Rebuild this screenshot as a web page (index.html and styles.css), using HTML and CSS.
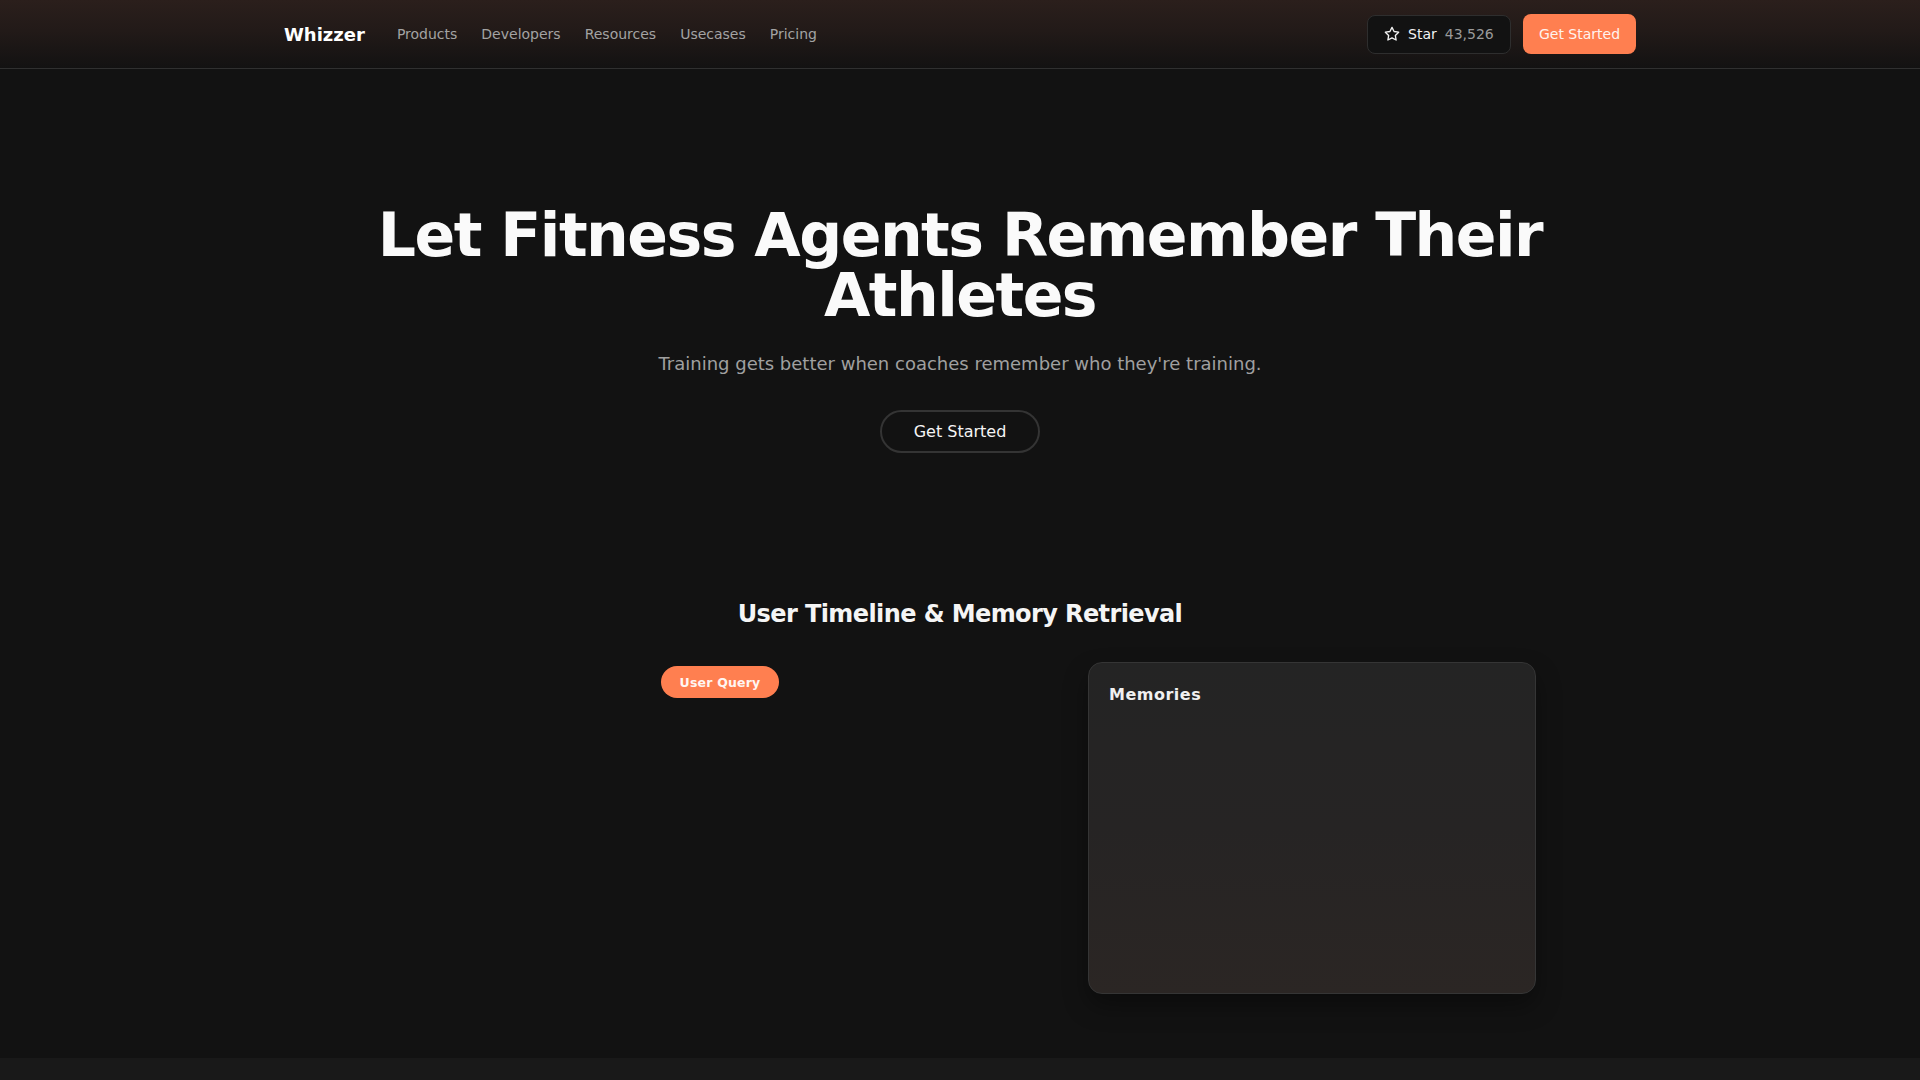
FILE: index.html
```html
<!DOCTYPE html>
<html lang="en">
<head>
<meta charset="utf-8">
<title>Whizzer</title>
<link rel="stylesheet" href="styles.css">
</head>
<body>
<header class="nav">
  <div class="nav-inner">
    <div class="nav-left">
      <a class="logo" href="#">Whizzer</a>
      <nav class="links">
        <a href="#">Products</a>
        <a href="#">Developers</a>
        <a href="#">Resources</a>
        <a href="#">Usecases</a>
        <a href="#">Pricing</a>
      </nav>
    </div>
    <div class="nav-right">
      <a class="star-btn" href="#">
        <svg class="star-icon" width="16" height="16" viewBox="0 0 24 24" fill="none" stroke="currentColor" stroke-width="2" stroke-linejoin="round"><polygon points="12 2 15.09 8.26 22 9.27 17 14.14 18.18 21.02 12 17.77 5.82 21.02 7 14.14 2 9.27 8.91 8.26 12 2"/></svg>
        <span class="star-label">Star</span>
        <span class="star-count">43,526</span>
      </a>
      <a class="cta" href="#">Get Started</a>
    </div>
  </div>
</header>

<main>
  <section class="hero">
    <h1 class="hero-title">Let Fitness Agents Remember Their Athletes</h1>
    <p class="hero-sub">Training gets better when coaches remember who they're training.</p>
    <a class="hero-btn" href="#">Get Started</a>
  </section>

  <section class="timeline">
    <h2 class="timeline-title">User Timeline &amp; Memory Retrieval</h2>
    <div class="timeline-grid">
      <div class="timeline-rail"></div>
      <div class="query-col">
        <span class="pill">User Query</span>
      </div>
      <div class="memories">
        <h3 class="memories-title">Memories</h3>
      </div>
    </div>
  </section>

  <section class="next"></section>
</main>
</body>
</html>
```

FILE: styles.css
```css
* { box-sizing: border-box; }

html, body {
  margin: 0;
  padding: 0;
  background: #121212;
  color: #ffffff;
  font-family: "DejaVu Sans", "Noto Sans", sans-serif;
}

a { text-decoration: none; color: inherit; }

.nav {
  height: 69px;
  background: linear-gradient(180deg, #2b1f1c 0%, #221a18 45%, #131212 100%);
  border-bottom: 1px solid #303030;
}

.nav-inner {
  max-width: 1400px;
  margin: 0 auto;
  padding: 0 24px;
  height: 68px;
  display: flex;
  align-items: center;
  justify-content: space-between;
}

.nav-left {
  display: flex;
  align-items: center;
  gap: 32px;
}

.logo {
  font-size: 18px;
  font-weight: 700;
  color: #ffffff;
}

.links {
  display: flex;
  gap: 24px;
}

.links a {
  font-size: 14px;
  color: #a3a3a3;
}

.nav-right {
  display: flex;
  align-items: center;
  gap: 12px;
}

.star-btn {
  display: flex;
  align-items: center;
  height: 39px;
  width: 144px;
  padding: 0 16px;
  border: 1px solid #2e2e2e;
  border-radius: 8px;
  background: #121212;
  font-size: 14px;
  color: #f2f2f2;
}

.star-icon { margin-right: 8px; color: #f2f2f2; }

.star-label { margin-right: 8px; }

.star-count { color: #9a9a9a; }

.cta {
  display: flex;
  align-items: center;
  justify-content: center;
  height: 40px;
  width: 113px;
  border-radius: 8px;
  background: #ff7f50;
  color: #fff3ee;
  font-size: 14px;
}

.hero {
  display: flex;
  flex-direction: column;
  align-items: center;
  padding-top: 136px;
}

.hero-title {
  margin: 0;
  max-width: 1200px;
  font-size: 60px;
  line-height: 60px;
  font-weight: 700;
  letter-spacing: -1.5px;
  text-align: center;
  color: #fafafa;
}

.hero-sub {
  margin: 25px 0 0;
  font-size: 18px;
  line-height: 28px;
  color: #a0a0a0;
}

.hero-btn {
  margin-top: 32px;
  display: flex;
  align-items: center;
  justify-content: center;
  width: 160px;
  height: 43px;
  border: 2px solid #343434;
  border-radius: 999px;
  font-size: 16px;
  color: #f5f5f5;
}

.timeline {
  padding: 145px 0 64px;
}

.timeline-title {
  margin: 0;
  text-align: center;
  font-size: 24px;
  line-height: 32px;
  font-weight: 700;
  letter-spacing: -0.6px;
  color: #f5f5f5;
}

.timeline-grid {
  max-width: 1152px;
  margin: 32px auto 0;
  display: grid;
  grid-template-columns: 245px 1fr 448px;
  gap: 32px;
}

.query-col {
  padding-top: 4px;
}

.pill {
  display: inline-flex;
  align-items: center;
  justify-content: center;
  width: 118px;
  height: 32px;
  border-radius: 999px;
  background: #ff7f50;
  color: #fff6f2;
  font-size: 12.5px;
  font-weight: 700;
  letter-spacing: 0.2px;
}

.memories {
  height: 332px;
  border: 1px solid #353535;
  border-radius: 14px;
  background: linear-gradient(180deg, #242424 0%, #262424 50%, #2b2624 100%);
  box-shadow: 0 12px 24px rgba(0, 0, 0, 0.35);
  padding: 20px 20px;
}

.memories-title {
  margin: 0;
  font-size: 16px;
  line-height: 24px;
  font-weight: 700;
  color: #f0f0f0;
  letter-spacing: 0.5px;
}

.next {
  height: 200px;
  background: #191919;
}
```
